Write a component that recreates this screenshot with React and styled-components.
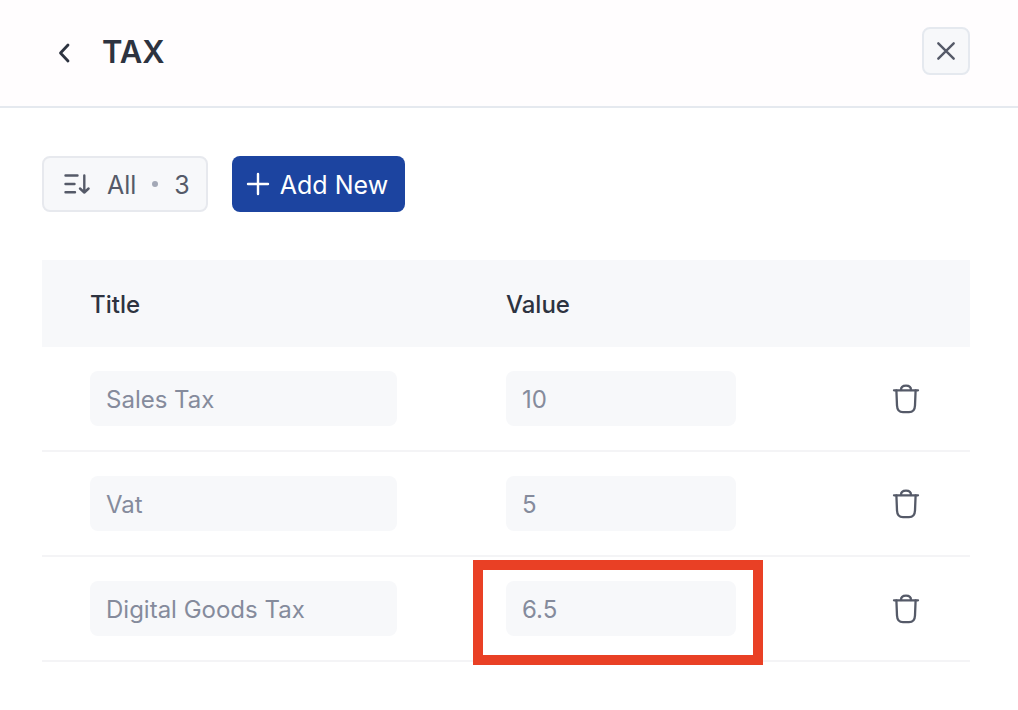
import React, { useState } from 'react';
import styled, { createGlobalStyle } from 'styled-components';

const GlobalStyle = createGlobalStyle`
  * {
    box-sizing: border-box;
  }

  body {
    margin: 0;
    background-color: #fff;
    color: #2d3340;
    font-family: Inter, 'Liberation Sans', sans-serif;
  }

  button,
  input {
    font-family: inherit;
  }
`;

const Header = styled.header`
  display: flex;
  align-items: center;
  padding: 27px 48px 31px;
  background-color: #fffdfe;
  border-bottom: 2px solid #e5e9ef;
`;

const BackButton = styled.button`
  display: flex;
  padding: 4px;
  border: none;
  background: none;
  color: #2d3340;
  cursor: pointer;
`;

const PageTitle = styled.h1`
  flex: 1;
  margin: 0 0 0 22px;
  padding-top: 2px;
  font-size: 31px;
  line-height: 40px;
  font-weight: 600;
`;

const CloseButton = styled.button`
  display: flex;
  align-items: center;
  justify-content: center;
  width: 48px;
  height: 48px;
  padding: 0;
  border: 2px solid #e5e9ef;
  border-radius: 8px;
  background-color: #f7f8fa;
  color: #555a68;
  cursor: pointer;
`;

const Content = styled.main`
  padding: 48px 48px 48px 42px;
`;

const Toolbar = styled.div`
  display: flex;
  gap: 24px;
  margin-bottom: 48px;
`;

const ToolbarButton = styled.button`
  display: flex;
  align-items: center;
  height: 56px;
  border-radius: 8px;
  font-size: 25px;
  line-height: 32px;
  cursor: pointer;
`;

const ButtonLabel = styled.span`
  padding-top: 2px;
`;

const FilterButton = styled(ToolbarButton)`
  gap: 16px;
  padding: 0 16px 0 17px;
  border: 2px solid #e7e9ee;
  background-color: #f7f8fa;
  color: #555a68;
`;

const Dot = styled.span`
  width: 6px;
  height: 6px;
  border-radius: 50%;
  background-color: #a3a8b6;
`;

const AddButton = styled(ToolbarButton)`
  gap: 8px;
  padding: 0 17px 0 12px;
  border: none;
  background-color: #1c44a0;
  color: #fff;
`;

const Table = styled.table`
  width: 100%;
  table-layout: fixed;
  border-collapse: separate;
  border-spacing: 0;
`;

const HeadCell = styled.th`
  width: ${props => props.$width || 'auto'};
  height: 87px;
  padding: 2px 48px 0;
  background-color: #f7f8fa;
  font-size: 24px;
  line-height: 32px;
  font-weight: 500;
  text-align: left;
`;

const Cell = styled.td`
  padding: 24px 0 24px 48px;
  border-bottom: 2px solid #f4f4f6;
`;

const ActionCell = styled(Cell)`
  padding-right: 48px;
`;

const Field = styled.div`
  position: relative;
  width: ${props => props.$width};

  ${props => props.$highlighted && `
    &::after {
      content: '';
      position: absolute;
      inset: -21px -27px -29px -33px;
      border: 10px solid #e94025;
      pointer-events: none;
    }
  `}
`;

const TextInput = styled.input`
  display: block;
  width: 100%;
  height: 55px;
  padding: 2px 16px 0;
  border: none;
  border-radius: 8px;
  background-color: #f7f8fa;
  color: #858b9c;
  font-size: 24px;
  line-height: 32px;
`;

const DeleteButton = styled.button`
  display: flex;
  margin-left: auto;
  padding: 0;
  border: none;
  background: none;
  color: #555a68;
  cursor: pointer;
`;

const ChevronIcon = () => (
  <svg width="24" height="24" viewBox="0 0 24 24" fill="none" stroke="currentColor" strokeWidth="2.8" strokeLinecap="round" strokeLinejoin="round">
    <path d="M16 6 8.5 14 16 22" />
  </svg>
);

const CloseIcon = () => (
  <svg width="24" height="24" viewBox="0 0 24 24" fill="none" stroke="currentColor" strokeWidth="2.4" strokeLinecap="round">
    <path d="M4.3 4.3 19.7 19.7M19.7 4.3 4.3 19.7" />
  </svg>
);

const SortIcon = () => (
  <svg width="30" height="28" viewBox="0 0 30 28" fill="none" stroke="currentColor" strokeWidth="2.4" strokeLinecap="round" strokeLinejoin="round">
    <path d="M4.5 5.5h12M4.5 14h9M4.5 22.3h9.5" />
    <path d="M23.3 5.5v17M19 18.5l4.3 4 4.3-4" />
  </svg>
);

const PlusIcon = () => (
  <svg width="28" height="28" viewBox="0 0 28 28" fill="none" stroke="currentColor" strokeWidth="2.4" strokeLinecap="round">
    <path d="M14 4v20M4 14h20" />
  </svg>
);

const TrashIcon = () => (
  <svg width="32" height="32" viewBox="0 0 32 32" fill="none" stroke="currentColor" strokeWidth="2.3" strokeLinecap="round" strokeLinejoin="round">
    <path d="M4 7.3h24" />
    <path d="M11 7C11 3.8 12.5 2.6 16 2.6S21 3.8 21 7" />
    <path d="M6.4 7.5 7 22.5C7.2 27.5 9 29.2 13 29.2h6c4 0 5.8-1.7 6-6.7l.6-15" />
  </svg>
);

const initialTaxes = [
  { id: 1, title: 'Sales Tax', value: '10' },
  { id: 2, title: 'Vat', value: '5' },
  { id: 3, title: 'Digital Goods Tax', value: '6.5', highlighted: true },
];

const App = () => {
  const [taxes, setTaxes] = useState(initialTaxes);

  const updateTax = (id, changes) => {
    setTaxes(taxes.map(tax => (tax.id === id ? { ...tax, ...changes } : tax)));
  };

  const addTax = () => {
    setTaxes([...taxes, { id: Date.now(), title: '', value: '' }]);
  };

  const removeTax = (id) => {
    setTaxes(taxes.filter(tax => tax.id !== id));
  };

  return (
    <>
      <GlobalStyle />
      <Header>
        <BackButton aria-label="Back"><ChevronIcon /></BackButton>
        <PageTitle>TAX</PageTitle>
        <CloseButton aria-label="Close"><CloseIcon /></CloseButton>
      </Header>
      <Content>
        <Toolbar>
          <FilterButton>
            <SortIcon />
            <ButtonLabel>All</ButtonLabel>
            <Dot />
            <ButtonLabel>{taxes.length}</ButtonLabel>
          </FilterButton>
          <AddButton onClick={addTax}>
            <PlusIcon />
            <ButtonLabel>Add New</ButtonLabel>
          </AddButton>
        </Toolbar>
        <Table>
          <thead>
            <tr>
              <HeadCell $width="416px">Title</HeadCell>
              <HeadCell $width="278px">Value</HeadCell>
              <HeadCell aria-label="Actions" />
            </tr>
          </thead>
          <tbody>
            {taxes.map(tax => (
              <tr key={tax.id}>
                <Cell>
                  <Field $width="307px">
                    <TextInput
                      aria-label="Title"
                      value={tax.title}
                      onChange={e => updateTax(tax.id, { title: e.target.value })}
                    />
                  </Field>
                </Cell>
                <Cell>
                  <Field $width="230px" $highlighted={tax.highlighted}>
                    <TextInput
                      aria-label="Value"
                      value={tax.value}
                      onChange={e => updateTax(tax.id, { value: e.target.value })}
                    />
                  </Field>
                </Cell>
                <ActionCell>
                  <DeleteButton aria-label="Delete" onClick={() => removeTax(tax.id)}>
                    <TrashIcon />
                  </DeleteButton>
                </ActionCell>
              </tr>
            ))}
          </tbody>
        </Table>
      </Content>
    </>
  );
};

export default App;
